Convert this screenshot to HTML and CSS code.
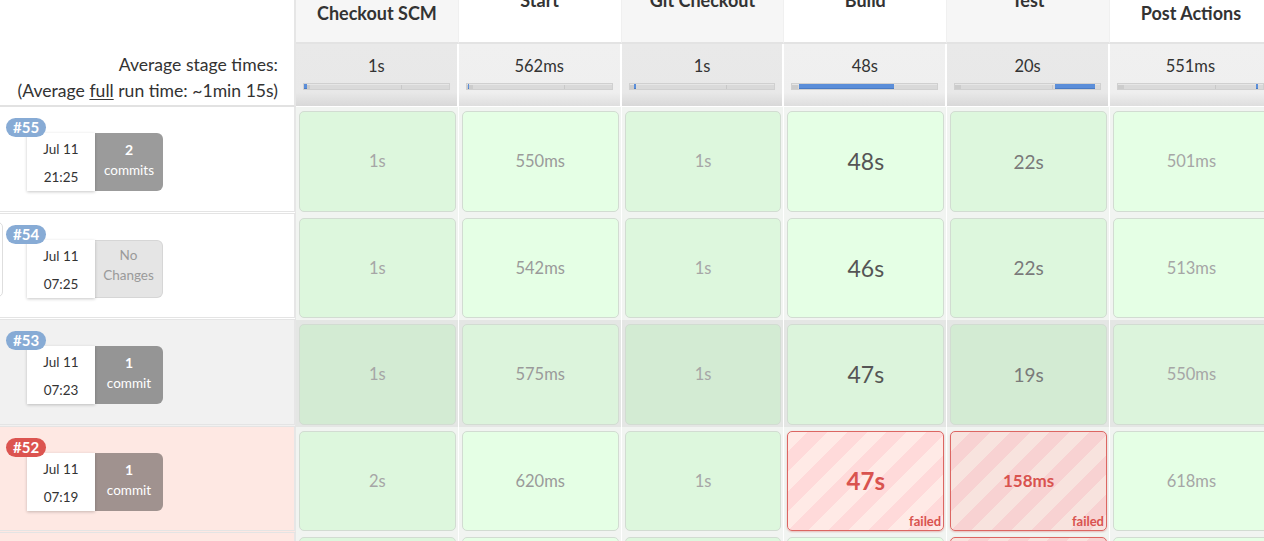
FILE: index.html
```html
<!DOCTYPE html>
<html>
<head>
<meta charset="utf-8">
<link rel="stylesheet" href="styles.css">
</head>
<body>
<div class="table">
  <div class="h-left">
    <div class="avg-label">Average stage times:</div>
    <div class="avg-label">(Average <u>full</u> run time: ~1min 15s)</div>
  </div>
  <div class="h-title alt"><span class="t">Checkout SCM</span></div>
  <div class="h-title"><span class="t t-up">Start</span></div>
  <div class="h-title alt"><span class="t t-up">Git Checkout</span></div>
  <div class="h-title"><span class="t t-up">Build</span></div>
  <div class="h-title alt"><span class="t t-up">Test</span></div>
  <div class="h-title"><span class="t">Post Actions</span></div>

  <div class="a-cell alt"><div class="a-val">1s</div><div class="bar"><div class="fill" style="left:0;width:3px"></div></div></div>
  <div class="a-cell"><div class="a-val">562ms</div><div class="bar"><div class="fill" style="left:1px;width:1px"></div></div></div>
  <div class="a-cell alt"><div class="a-val">1s</div><div class="bar"><div class="fill" style="left:4px;width:2px"></div></div></div>
  <div class="a-cell"><div class="a-val">48s</div><div class="bar"><div class="fill" style="left:7px;width:95px"></div></div></div>
  <div class="a-cell alt"><div class="a-val">20s</div><div class="bar"><div class="fill" style="left:100px;width:40px"></div></div></div>
  <div class="a-cell"><div class="a-val">551ms</div><div class="bar"><div class="fill" style="left:138px;width:2px"></div></div></div>

  <!-- #55 -->
  <div class="r-left">
    <div class="runinfo">
      <span class="badge">#55</span>
      <div class="boxes">
        <div class="date"><div>Jul 11</div><div>21:25</div></div>
        <div class="commits"><b>2</b><span>commits</span></div>
      </div>
    </div>
  </div>
  <div class="sc alt"><div class="box ok"><span class="v v1">1s</span></div></div>
  <div class="sc"><div class="box ok"><span class="v v2">550ms</span></div></div>
  <div class="sc alt"><div class="box ok"><span class="v v1">1s</span></div></div>
  <div class="sc"><div class="box ok"><span class="v v4">48s</span></div></div>
  <div class="sc alt"><div class="box ok"><span class="v v3">22s</span></div></div>
  <div class="sc"><div class="box ok"><span class="v v1">501ms</span></div></div>

  <!-- #54 -->
  <div class="r-left">
    <div class="stub"></div>
    <div class="runinfo">
      <span class="badge">#54</span>
      <div class="boxes">
        <div class="date"><div>Jul 11</div><div>07:25</div></div>
        <div class="commits none"><span>No</span><span>Changes</span></div>
      </div>
    </div>
  </div>
  <div class="sc alt"><div class="box ok"><span class="v v1">1s</span></div></div>
  <div class="sc"><div class="box ok"><span class="v v2">542ms</span></div></div>
  <div class="sc alt"><div class="box ok"><span class="v v1">1s</span></div></div>
  <div class="sc"><div class="box ok"><span class="v v4">46s</span></div></div>
  <div class="sc alt"><div class="box ok"><span class="v v3">22s</span></div></div>
  <div class="sc"><div class="box ok"><span class="v v1">513ms</span></div></div>

  <!-- #53 -->
  <div class="r-left hov">
    <div class="runinfo">
      <span class="badge">#53</span>
      <div class="boxes">
        <div class="date"><div>Jul 11</div><div>07:23</div></div>
        <div class="commits"><b>1</b><span>commit</span></div>
      </div>
    </div>
  </div>
  <div class="sc alt hov"><div class="box ok"><span class="v v1">1s</span></div></div>
  <div class="sc hov"><div class="box ok"><span class="v v2">575ms</span></div></div>
  <div class="sc alt hov"><div class="box ok"><span class="v v1">1s</span></div></div>
  <div class="sc hov"><div class="box ok"><span class="v v4">47s</span></div></div>
  <div class="sc alt hov"><div class="box ok"><span class="v v3">19s</span></div></div>
  <div class="sc hov"><div class="box ok"><span class="v v1">550ms</span></div></div>

  <!-- #52 -->
  <div class="r-left bad">
    <div class="runinfo">
      <span class="badge red">#52</span>
      <div class="boxes">
        <div class="date"><div>Jul 11</div><div>07:19</div></div>
        <div class="commits"><b>1</b><span>commit</span></div>
      </div>
    </div>
  </div>
  <div class="sc alt"><div class="box ok"><span class="v v1">2s</span></div></div>
  <div class="sc"><div class="box ok"><span class="v v2">620ms</span></div></div>
  <div class="sc alt"><div class="box ok"><span class="v v1">1s</span></div></div>
  <div class="sc"><div class="box fail"><span class="v vf4">47s</span><span class="flab">failed</span></div></div>
  <div class="sc alt"><div class="box fail"><span class="v vf2">158ms</span><span class="flab">failed</span></div></div>
  <div class="sc"><div class="box ok"><span class="v v1">618ms</span></div></div>

  <!-- #51 -->
  <div class="r-left bad"></div>
  <div class="sc alt"><div class="box ok"></div></div>
  <div class="sc"><div class="box ok"></div></div>
  <div class="sc alt"><div class="box ok"></div></div>
  <div class="sc"><div class="box ok"></div></div>
  <div class="sc alt"><div class="box fail"></div></div>
  <div class="sc"><div class="box ok"></div></div>
</div>
</body>
</html>
```

FILE: styles.css
```css
html, body {
  margin: 0;
  padding: 0;
  background: #fff;
  overflow: hidden;
}
body {
  font-family: "Lato", "Open Sans", sans-serif;
  color: #333;
  width: 1264px;
  height: 541px;
}
.table {
  display: grid;
  grid-template-columns: 296px repeat(6, 162.8px);
  grid-template-rows: 44px 63px repeat(5, 106.5px);
  width: max-content;
}
.h-left {
  grid-row: span 2;
  background: #fff;
  border-right: 2px solid #e6e6e6;
  border-bottom: 2px solid #e2e2e2;
  box-sizing: border-box;
  display: flex;
  flex-direction: column;
  justify-content: flex-end;
  align-items: flex-end;
  padding: 0 16px 1px 0;
}
.avg-label {
  font-size: 17.6px;
  line-height: 26px;
  color: #333;
  white-space: nowrap;
}
.avg-label u {
  text-decoration-thickness: 1px;
  text-underline-offset: 2px;
}
.h-title {
  background: #fff;
  border-bottom: 2px solid #e3e3e3;
  border-right: 1px solid #f0f0f0;
  box-sizing: border-box;
  text-align: center;
  overflow: hidden;
}
.h-title.alt {
  background: #f6f6f6;
}
.t {
  display: block;
  font-weight: 700;
  font-size: 18px;
  line-height: 22px;
  padding-top: 2px;
  white-space: nowrap;
  color: #333;
}
.t-up {
  margin-top: -13px;
}
.a-cell {
  background: linear-gradient(#f0f0f0 0, #efefef 78%, #dedede 100%);
  border-right: 2px solid #fff;
  box-sizing: border-box;
  padding: 12px 7px 0 7px;
  border-bottom: 1px solid #fff;
}
.a-cell.alt {
  background: linear-gradient(#e9e9e9 0, #e8e8e8 78%, #d8d8d8 100%);
}
.a-val {
  text-align: center;
  font-size: 16.5px;
  line-height: 20px;
  color: #333;
}
.bar {
  position: relative;
  margin-top: 7px;
  height: 5px;
  border: 1px solid #d0d0d0;
  background: linear-gradient(90deg, #cccccc 0, #cccccc 6px, #dadada 6px, #dadada 67%, #c8c8c8 67%, #c8c8c8 calc(67% + 1px), #d9d9d9 calc(67% + 1px));
  box-shadow: inset 0 1px 0 #e6e6e6;
}
.fill {
  position: absolute;
  top: 0;
  height: 4px;
  background: #5b8ed9;
  border-bottom: 1px solid #4a7bc4;
}
.r-left {
  background: #fff;
  border-right: 2px solid #e6e6e6;
  border-bottom: 3px double #e4e4e4;
  box-sizing: border-box;
  display: flex;
  align-items: flex-start;
}
.r-left.hov {
  background: #f1f1f1;
}
.r-left.bad {
  background: #fee8e3;
}
.stub {
  width: 12px;
  height: 75px;
  margin: 8px -3px 0 -9px;
  background: #fff;
  border: 1px solid #dedede;
  border-radius: 5px;
  box-sizing: border-box;
}
.runinfo {
  padding: 11px 0 0 6px;
  display: flex;
  flex-direction: column;
}
.badge {
  position: relative;
  z-index: 2;
  align-self: flex-start;
  background: #87abd5;
  color: #fff;
  font-weight: 700;
  font-size: 15px;
  line-height: 19px;
  height: 19px;
  padding: 0 7px;
  border-radius: 10px;
}
.badge.red {
  background: #dc5450;
}
.boxes {
  display: flex;
  margin: -4px 0 0 21px;
}
.date {
  width: 68px;
  height: 58px;
  background: #fff;
  box-shadow: 0 1px 3px rgba(0, 0, 0, 0.22);
  box-sizing: border-box;
  padding-top: 2px;
  text-align: center;
  font-size: 13.5px;
  line-height: 28px;
  color: #333;
  position: relative;
  z-index: 1;
}
.commits {
  width: 68px;
  height: 58px;
  background: #9b9b9b;
  border-radius: 0 6px 6px 0;
  box-sizing: border-box;
  padding-top: 7px;
  display: flex;
  flex-direction: column;
  align-items: center;
  color: #fff;
  font-size: 13.5px;
  line-height: 20px;
}
.r-left.hov .commits {
  background: #959595;
}
.r-left.bad .commits {
  background: #a0928f;
}
.commits b {
  font-weight: 700;
  font-size: 14px;
}
.commits.none {
  background: #e5e5e5;
  color: #9a9a9a;
  border: 1px solid #d6d6d6;
  border-left: none;
  padding-top: 4px;
}
.sc {
  background: #f1f4f1;
  border-right: 1px solid #fff;
  box-sizing: border-box;
  padding: 4px 2px 2px 3px;
  display: flex;
}
.sc.hov {
  background: #e4e6e4;
}
.box {
  flex: 1;
  border-radius: 5px;
  box-sizing: border-box;
  display: grid;
  place-items: center;
  overflow: hidden;
}
.box.ok {
  background: #e5ffe5;
  border: 1px solid #d2dcd2;
}
.sc.alt .box.ok {
  background: #ddf7dd;
}
.sc.hov .box.ok {
  background: #dcf4dc;
}
.sc.alt.hov .box.ok {
  background: #d3ebd3;
}
.box.fail {
  border: 1px solid #dc6662;
  box-shadow: 0 1px 2px rgba(200, 60, 60, 0.3);
  background: repeating-linear-gradient(135deg, #ffeae6 0, #ffeae6 14px, #ffdada 14px, #ffdada 28px);
}
.sc.alt .box.fail {
  background: repeating-linear-gradient(135deg, #f8e3de 0, #f8e3de 14px, #f8d2d2 14px, #f8d2d2 28px);
}
.v {
  grid-area: 1 / 1;
  white-space: nowrap;
}
.v1 {
  font-size: 16.5px;
  color: #a6a6a6;
}
.v2 {
  font-size: 16.5px;
  color: #9a9a9a;
}
.v3 {
  font-size: 19px;
  color: #7a7a7a;
}
.v4 {
  font-size: 23px;
  color: #555;
}
.vf4 {
  font-size: 24px;
  font-weight: 700;
  color: #d9534f;
}
.vf2 {
  font-size: 17px;
  font-weight: 700;
  color: #d9534f;
}
.flab {
  grid-area: 1 / 1;
  align-self: end;
  justify-self: end;
  font-size: 13px;
  font-weight: 700;
  color: #d9534f;
  line-height: 16px;
  padding: 0 2px 1px 0;
}
```
